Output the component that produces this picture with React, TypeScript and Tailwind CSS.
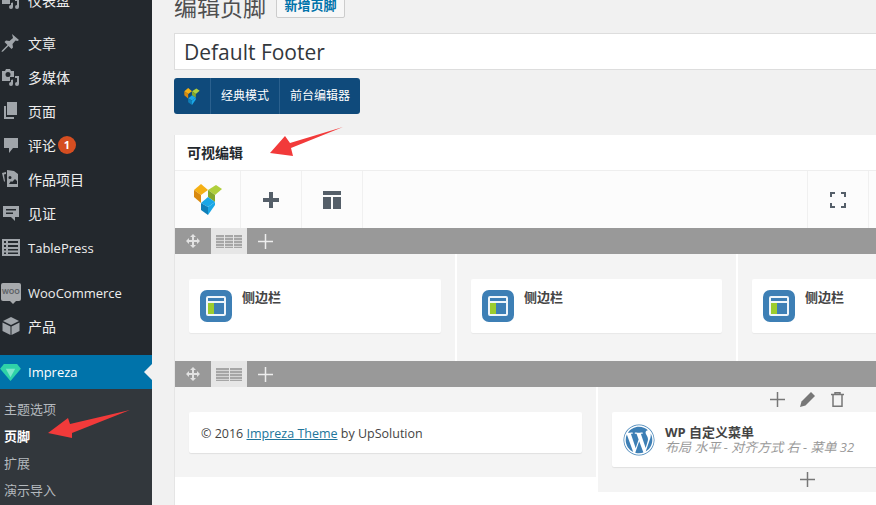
import { FaWordpress } from "react-icons/fa";

const cjk = { fontFamily: '"Open Sans", "Noto Sans CJK SC", sans-serif' };

function MenuIcon({ name }: { name: string }) {
  const c = "#a0a5aa";
  switch (name) {
    case "pin":
      return <path fill={c} d="M11 1l7 6-1.500 1-2-.500-3 3.500.500 3.500-1.500 1.500-3-3-5.500 5.500-1.500.500.500-1.500 5.500-5.500-3-3 1.500-1.500 3.500.500 3.500-3-.500-2z" />;
    case "media":
      return <path fill={c} fillRule="evenodd" d="M1 4h3l1-2h4l1 2h3v6h-4v4H1zM7 5a2.500 2.500 0 100 5 2.500 2.500 0 000-5zM14 9h4v8a2 2 0 11-2-2V11h-2zM10 13l2-.500v4.500a2 2 0 11-2-2z" />;
    case "pages":
      return <path fill={c} d="M6 1h10v13H6zM3 5h2v11h8v2H3z" />;
    case "comment":
      return <path fill={c} d="M3 3h14v10h-5l-4 5v-5H3z" />;
    case "portfolio":
      return <path fill={c} fillRule="evenodd" d="M1 4l4-1v2l-2 .500 1 7H3zM6 1l7 1 4 3v13H6zM9 7a1.500 1.500 0 100 3 1.500 1.500 0 000-3zM8 15h8v-3l-2-2-3 3-1-1z" />;
    case "testimonial":
      return <path fill={c} fillRule="evenodd" d="M2 3h16v11h-4v4l-4-4H2zM5 6v1.500h10V6zM5 9.500V11h7V9.500z" />;
    case "table":
      return <path fill={c} fillRule="evenodd" d="M1 2h18v17H1zM3 4v2h2V4zm4 0v2h10V4zM3 8v2h2V8zm4 0v2h10V8zM3 12v1.500h2V12zm4 0v1.500h10V12zM3 15.500V17h2v-1.500zm4 0V17h10v-1.500z" />;
    case "box":
      return <path fill={c} d="M10 1l8 4-8 4-8-4zM1.500 6.500L9.500 10.500V19l-8-4zM18.500 6.500V15l-8 4v-8.500z" />;
    default:
      return null;
  }
}

function MenuItem({ icon, label, badge, latin }: { icon: string; label: string; badge?: boolean; latin?: boolean }) {
  return (
    <div className="flex h-[34px] items-center text-[14px] text-[#eeeeee]">
      <svg viewBox="0 0 20 20" className="ml-px mr-[7px] h-5 w-5 shrink-0">
        <MenuIcon name={icon} />
      </svg>
      <span className={latin ? "pt-[3px] text-[13px]" : ""}>{label}</span>
      {badge && (
        <span className="ml-[2px] flex h-[18px] w-[18px] items-center justify-center rounded-full bg-[#d54e21] text-[11px] font-bold text-white">
          1
        </span>
      )}
    </div>
  );
}

function Sidebar() {
  return (
    <aside className="flex h-[505px] w-[152px] shrink-0 flex-col overflow-hidden bg-[#23282d]" style={cjk}>
      <div className="-mt-[17px] mb-[9px]">
        <MenuItem icon="media" label="仪表盘" />
      </div>
      <MenuItem icon="pin" label="文章" />
      <MenuItem icon="media" label="多媒体" />
      <MenuItem icon="pages" label="页面" />
      <MenuItem icon="comment" label="评论" badge />
      <MenuItem icon="portfolio" label="作品项目" />
      <MenuItem icon="testimonial" label="见证" />
      <MenuItem icon="table" label="TablePress" latin />
      <div className="h-[11px]" />
      <div className="flex h-[34px] items-center text-[13px] text-[#eeeeee]">
        <div className="relative ml-px mr-[7px] flex h-[18px] w-[20px] items-center justify-center rounded-[2px] bg-[#a7aaad] text-[7px] font-bold text-[#5f6468]">
          WOO
          <div className="absolute -bottom-[3px] left-[9px] h-0 w-0 border-x-[3px] border-t-[3px] border-x-transparent border-t-[#a7aaad]" />
        </div>
        <span className="pt-[3px]">WooCommerce</span>
      </div>
      <MenuItem icon="box" label="产品" />
      <div className="h-[12px]" />
      <div className="relative flex h-[34px] items-center bg-[#0073aa] text-[13px] text-white">
        <svg viewBox="0 0 22 18" className="mr-[7px] h-[17px] w-[21px] shrink-0">
          <path fill="#2fd3a8" d="M0 5l4-5h14l4 5-11 13z" />
          <path fill="#7ee8cc" d="M6 5h10l-5 9z" />
        </svg>
        <span className="pt-[2px]">Impreza</span>
        <div className="absolute right-0 top-[9px] h-0 w-0 border-y-[8px] border-r-[8px] border-y-transparent border-r-[#f1f1f1]" />
      </div>
      <div className="flex flex-1 flex-col bg-[#32373c] pl-[4px] pt-[7px] text-[13px] text-[#b4b9be]">
        <div className="flex h-[27px] items-center">主题选项</div>
        <div className="flex h-[27px] items-center font-bold text-white">页脚</div>
        <div className="flex h-[27px] items-center">扩展</div>
        <div className="flex h-[27px] items-center">演示导入</div>
      </div>
    </aside>
  );
}

function VcLogo({ className }: { className: string }) {
  return (
    <svg viewBox="0 0 28 31" className={className}>
      <path fill="#f5b014" d="M0 6l7-6 7 6-7 5z" />
      <path fill="#d98a10" d="M0 6l7 5v8l-7-6z" />
      <path fill="#b0cf3c" d="M14 6l8-5 6 4-7 6z" />
      <path fill="#84a82c" d="M14 6l7 5v7l-7-5z" />
      <path fill="#1aa7e6" d="M7 19l7-6 7 5-7 5z" />
      <path fill="#0f7fb8" d="M7 19l7 4v8l-7-5z" />
      <path fill="#1aa7e6" d="M14 23l7-5v3l-7 10z" />
    </svg>
  );
}

function RowBar({ cols }: { cols: number }) {
  return (
    <div className="flex h-[26px] items-stretch bg-[#999999]">
      <div className="flex w-[36px] items-center justify-center">
        <svg viewBox="0 0 14 14" className="h-[14px] w-[14px]">
          <path fill="#e2e2e2" d="M7 0l3 3H8v3h3V4l3 3-3 3V8H8v3h2l-3 3-3-3h2V8H3v2L0 7l3-3v2h3V3H4z" />
        </svg>
      </div>
      <div className="flex w-[36px] items-center justify-center bg-[#e6e6e6]">
        <div className={cols === 3 ? "grid h-[13px] w-[26px] grid-cols-3 gap-x-px" : "grid h-[13px] w-[26px] grid-cols-2 gap-x-px"}>
          {Array.from({ length: cols }).map((_, i) => (
            <div
              key={i}
              className="bg-[repeating-linear-gradient(#a6a6a6_0,#a6a6a6_2px,#d4d4d4_2px,#d4d4d4_3px)]"
            />
          ))}
        </div>
      </div>
      <div className="flex w-[37px] items-center justify-center">
        <svg viewBox="0 0 15 15" className="h-[15px] w-[15px]" stroke="#eeeeee" strokeWidth="1.500">
          <path d="M7.500 0v15M0 7.500h15" />
        </svg>
      </div>
    </div>
  );
}

function SidebarCard() {
  return (
    <div className="flex h-[54px] items-start rounded-[2px] bg-white pl-[11px] pt-[11px] shadow-[0_1px_1px_rgba(0,0,0,0.05)]">
      <div className="mr-[10px] flex h-[32px] w-[32px] shrink-0 items-center justify-center rounded-[7px] bg-[#3d7fb5]">
        <div className="flex h-[20px] w-[20px] flex-col rounded-[2px] border-2 border-[#eef5fa] bg-[#3d7fb5]">
          <div className="h-[5px] border-b-2 border-[#eef5fa]" />
          <div className="flex flex-1">
            <div className="w-[6px] bg-[#9ccc2e]" />
          </div>
        </div>
      </div>
      <span className="-mt-[1px] text-[13px] font-semibold leading-[16px] text-[#444444]">侧边栏</span>
    </div>
  );
}

function Main() {
  return (
    <main className="min-w-0 flex-1 pl-[22px]" style={cjk}>
      <div className="-mt-[9px] flex h-[29px] items-center">
        <h1 className="mt-[3px] text-[23px] font-normal leading-[29px] text-[#4f4f4f]">编辑页脚</h1>
        <span className="ml-[10px] flex h-[24px] w-[69px] items-center justify-center rounded-[2px] border border-[#cccccc] bg-[#f7f7f7] text-[13px] font-bold text-[#0073aa]">
          新增页脚
        </span>
      </div>
      <div className="-mr-[4px] mt-[13px] flex h-[37px] items-center border border-[#dddddd] bg-white pl-[9px] pt-[2px] text-[21px] text-[#32373c]">
        Default Footer
      </div>
      <div className="mt-[8px] flex h-[36px] w-[186px] rounded-[3px] bg-[#0f4a7b] text-[12px] text-white">
        <div className="flex w-[37px] items-center justify-center border-r border-[#2a608e]">
          <VcLogo className="h-[17px] w-[16px]" />
        </div>
        <div className="flex w-[69px] items-center justify-center border-r border-[#2a608e]">经典模式</div>
        <div className="flex flex-1 items-center justify-center">前台编辑器</div>
      </div>

      <section className="-mr-[4px] mt-[21px] h-[400px] border-l border-[#e5e5e5] bg-white">
        <div className="flex h-[36px] items-center border-b border-[#eeeeee] pl-[12px] text-[14px] font-bold text-[#23282d]">
          可视编辑
        </div>
        <div className="flex h-[57px] items-stretch bg-[#fcfcfc]">
          <div className="flex w-[66px] items-center justify-center border-r border-[#f0f0f0]">
            <VcLogo className="h-[31px] w-[28px]" />
          </div>
          <div className="flex w-[61px] items-center justify-center border-r border-[#f0f0f0]">
            <svg viewBox="0 0 18 18" className="h-[18px] w-[18px]">
              <path fill="#555f69" d="M7 1h4v6h6v4h-6v6H7v-6H1V7h6z" />
            </svg>
          </div>
          <div className="flex w-[61px] items-center justify-center border-r border-[#f0f0f0]">
            <svg viewBox="0 0 18 18" className="h-[18px] w-[18px]">
              <path fill="#555f69" d="M0 0h18v4H0zM0 6h8v12H0zM10 6h8v12h-8z" />
            </svg>
          </div>
          <div className="flex-1" />
          <div className="flex w-[62px] items-center justify-center border-x border-[#f0f0f0]">
            <svg viewBox="0 0 16 16" className="h-[16px] w-[16px]" fill="none" stroke="#555f69" strokeWidth="2">
              <path d="M1 5V1h4M11 1h4v4M15 11v4h-4M5 15H1v-4" />
            </svg>
          </div>
          <div className="w-[11px]" />
        </div>
        <RowBar cols={3} />
        <div className="flex h-[107px] gap-[2px]">
          <div className="w-[280px] shrink-0 bg-[#f4f4f4] px-[14px] pt-[25px]">
            <SidebarCard />
          </div>
          <div className="w-[279px] shrink-0 bg-[#f4f4f4] px-[14px] pt-[25px]">
            <SidebarCard />
          </div>
          <div className="flex-1 bg-[#f4f4f4] pl-[14px] pt-[25px]">
            <SidebarCard />
          </div>
        </div>
        <RowBar cols={2} />
        <div className="flex items-start gap-[2px]">
          <div className="h-[90px] w-[421px] shrink-0 bg-[#f4f4f4] px-[14px] pt-[25px]">
            <div className="flex h-[41px] items-center rounded-[2px] bg-white pl-[12px] pt-[3px] text-[12.500px] text-[#444444] shadow-[0_1px_1px_rgba(0,0,0,0.08)]">
              © 2016&nbsp;<span className="text-[#21759b] underline">Impreza Theme</span>&nbsp;by UpSolution
            </div>
          </div>
          <div className="flex h-[105px] flex-1 flex-col bg-[#f4f4f4] pl-[14px]">
            <div className="flex h-[25px] items-center gap-[15px] pl-[158px]">
              <svg viewBox="0 0 15 15" className="h-[15px] w-[15px]" stroke="#777777" strokeWidth="1.500">
                <path d="M7.500 0v15M0 7.500h15" />
              </svg>
              <svg viewBox="0 0 15 15" className="h-[15px] w-[15px]">
                <path fill="#777777" d="M11 0l4 4-9.500 9.500L0 15l1.500-5.500z" />
              </svg>
              <svg viewBox="0 0 15 15" className="h-[15px] w-[15px]" fill="none" stroke="#777777" strokeWidth="1.500">
                <path d="M1 2.500h13M5 2.500V.750h5V2.500M3 2.500v11.750h9V2.500" />
              </svg>
            </div>
            <div className="flex h-[55px] items-center rounded-[2px] bg-white pl-[11px] shadow-[0_1px_1px_rgba(0,0,0,0.08)]">
              <FaWordpress className="mr-[10px] h-[32px] w-[32px] shrink-0 text-[#3d7fb5]" />
              <div className="flex min-w-0 flex-col whitespace-nowrap">
                <span className="text-[13px] font-bold leading-[15px] text-[#444444]">WP 自定义菜单</span>
                <span className="text-[13px] italic leading-[15px] text-[#999999]">布局 水平 - 对齐方式 右 - 菜单 32</span>
              </div>
            </div>
            <div className="flex flex-1 items-center pl-[188px]">
              <svg viewBox="0 0 15 15" className="h-[15px] w-[15px]" stroke="#777777" strokeWidth="1.500">
                <path d="M7.500 0v15M0 7.500h15" />
              </svg>
            </div>
          </div>
        </div>
      </section>
    </main>
  );
}

export default function App() {
  return (
    <div className="relative flex h-[505px] w-[876px] overflow-hidden bg-[#f1f1f1]">
      <Sidebar />
      <Main />
      {/* red annotation arrows */}
      <svg viewBox="0 0 876 505" className="pointer-events-none absolute left-0 top-0 h-[505px] w-[876px]">
        <path fill="#f23a3a" d="M48 433L68 418L70 424L130 410L72 433L72 438z" />
        <path fill="#f23a3a" d="M270 153L285 136L290 143L343 127L291 148L293 156z" />
      </svg>
    </div>
  );
}
